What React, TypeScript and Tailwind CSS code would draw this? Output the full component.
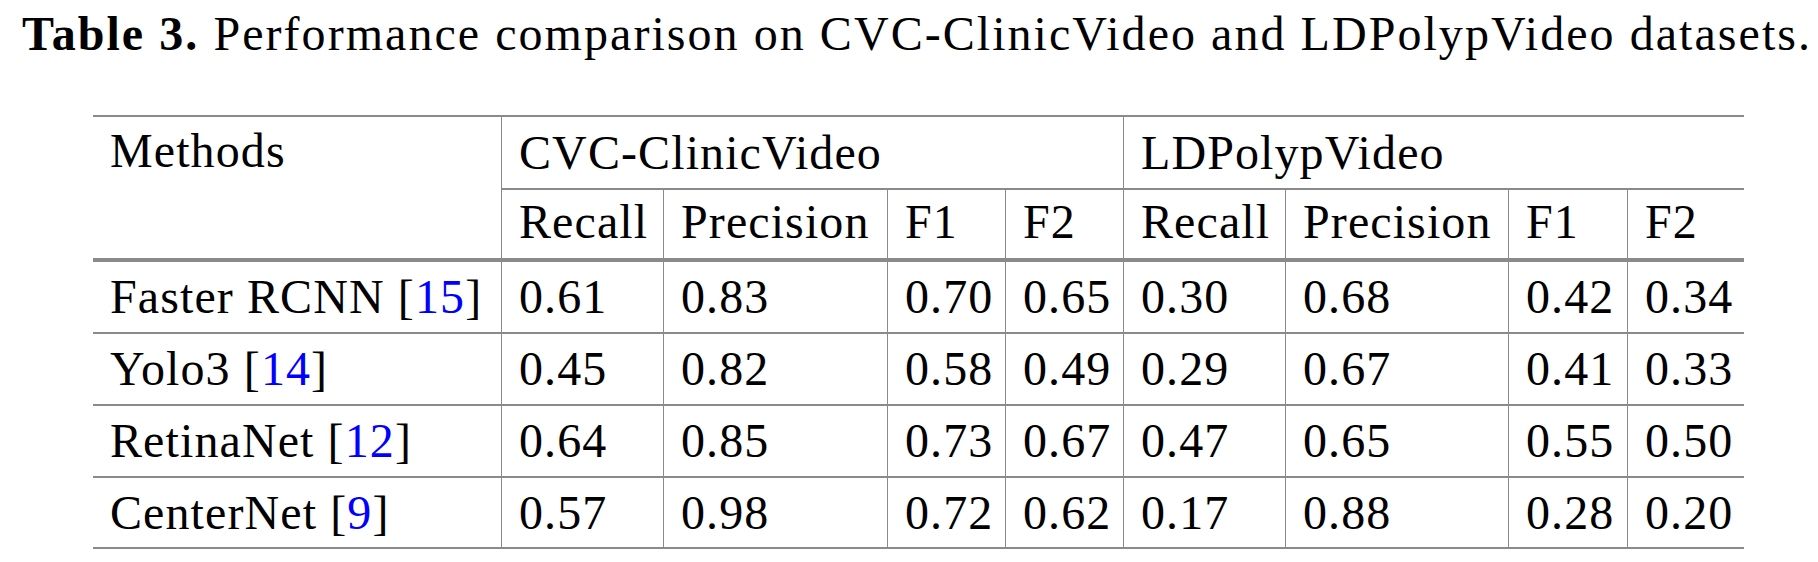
const rows = [
  { name: 'Faster RCNN', cite: '15', vals: ['0.61', '0.83', '0.70', '0.65', '0.30', '0.68', '0.42', '0.34'] },
  { name: 'Yolo3', cite: '14', vals: ['0.45', '0.82', '0.58', '0.49', '0.29', '0.67', '0.41', '0.33'] },
  { name: 'RetinaNet', cite: '12', vals: ['0.64', '0.85', '0.73', '0.67', '0.47', '0.65', '0.55', '0.50'] },
  { name: 'CenterNet', cite: '9', vals: ['0.57', '0.98', '0.72', '0.62', '0.17', '0.88', '0.28', '0.20'] },
];

const metrics = ['Recall', 'Precision', 'F1', 'F2', 'Recall', 'Precision', 'F1', 'F2'];

// per-row height + top rule (first body row sits under the thick rule)
const rowClass = ['h-[74px]', 'h-[72px]', 'h-[72px]', 'h-[73px]'];
const cellRule = ['border-t-4', 'border-t-2', 'border-t-2', 'border-t-2 border-b-2'];

export default function App() {
  return (
    <div className="min-h-screen w-full bg-white text-black font-[family-name:'Liberation_Serif',serif] text-[48px] leading-none tracking-[1.1px]">
      <p className="pt-[10px] pl-[22px] tracking-[2.05px] whitespace-nowrap">
        <span className="font-bold">Table 3.</span> Performance comparison on CVC-ClinicVideo and LDPolypVideo datasets.
      </p>

      <table className="mt-[57px] ml-[93px] w-[1651px] table-fixed border-separate border-spacing-0">
        <colgroup>
          <col className="w-[408px]" />
          <col className="w-[162px]" />
          <col className="w-[224px]" />
          <col className="w-[118px]" />
          <col className="w-[118px]" />
          <col className="w-[162px]" />
          <col className="w-[223px]" />
          <col className="w-[119px]" />
          <col className="w-[117px]" />
        </colgroup>
        <thead>
          <tr className="h-[73px]">
            <th rowSpan={2} className="border-t-2 border-[#8a8a8a] pl-[17px] pt-[10px] text-left align-top font-normal">
              Methods
            </th>
            <th colSpan={4} className="border-t-2 border-l border-[#8a8a8a] pl-[17px] text-left align-middle font-normal">
              CVC-ClinicVideo
            </th>
            <th colSpan={4} className="border-t-2 border-l border-[#8a8a8a] pl-[17px] text-left align-middle font-normal">
              LDPolypVideo
            </th>
          </tr>
          <tr className="h-[70px]">
            {metrics.map((m, i) => (
              <th key={i} className="border-t-2 border-l border-[#8a8a8a] pl-[17px] pb-[5px] text-left align-middle font-normal">
                {m}
              </th>
            ))}
          </tr>
        </thead>
        <tbody>
          {rows.map((r, ri) => (
            <tr key={r.name} className={rowClass[ri]}>
              <td className={`${cellRule[ri]} border-[#8a8a8a] pl-[17px] align-middle whitespace-nowrap`}>
                {r.name} [<span className="text-[#0000ff]">{r.cite}</span>]
              </td>
              {r.vals.map((v, vi) => (
                <td key={vi} className={`${cellRule[ri]} border-l border-[#8a8a8a] pl-[17px] align-middle`}>
                  {v}
                </td>
              ))}
            </tr>
          ))}
        </tbody>
      </table>
    </div>
  );
}
